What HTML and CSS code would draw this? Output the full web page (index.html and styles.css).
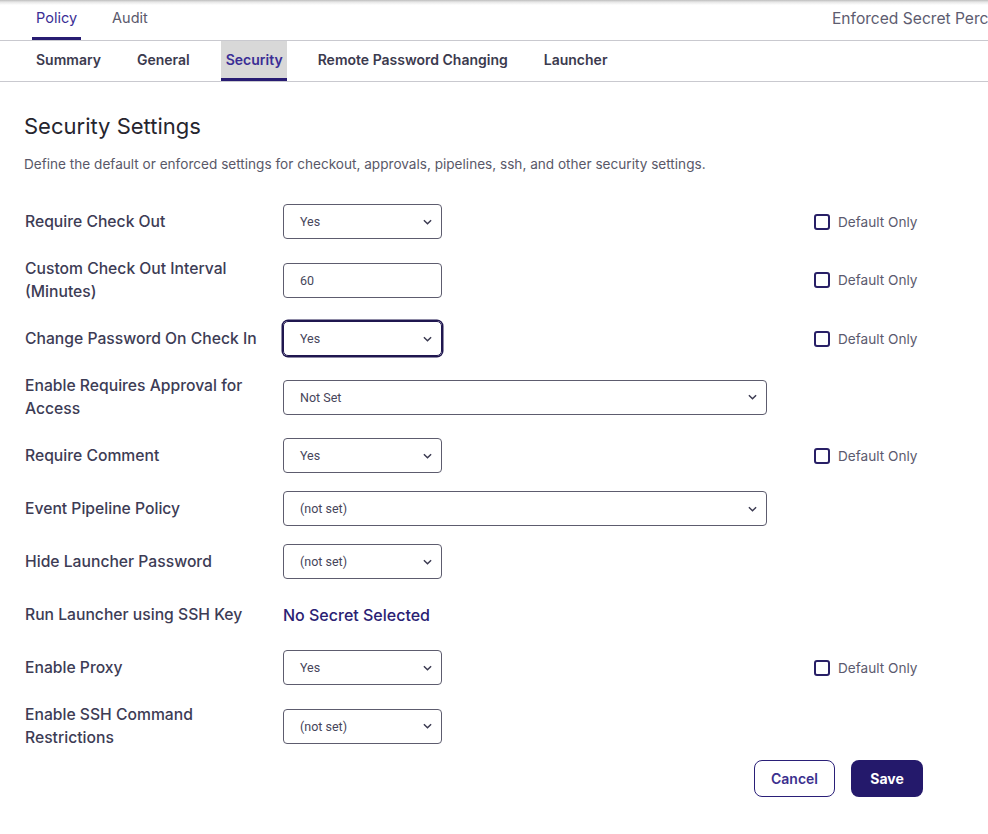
FILE: index.html
```html
<!DOCTYPE html>
<html>
<head>
<meta charset="utf-8">
<link rel="stylesheet" href="styles.css">
</head>
<body>
<div class="topbar">
  <nav class="tabs">
    <span class="tab active">Policy</span>
    <span class="tab">Audit</span>
  </nav>
  <div class="title">Enforced Secret Percentage</div>
</div>
<nav class="subtabs">
  <span class="subtab">Summary</span>
  <span class="subtab">General</span>
  <span class="subtab active">Security</span>
  <span class="subtab">Remote Password Changing</span>
  <span class="subtab">Launcher</span>
</nav>
<main class="content">
  <h1 class="heading">Security Settings</h1>
  <p class="desc">Define the default or enforced settings for checkout, approvals, pipelines, ssh, and other security settings.</p>
  <div class="form">
    <div class="label">Require Check Out</div>
    <div class="ctl"><div class="select">Yes<svg class="chev" viewBox="0 0 10 6"><polyline points="1,1 5,5 9,1"/></svg></div></div>
    <label class="chk"><span class="box"></span>Default Only</label>

    <div class="label two">Custom Check Out Interval (Minutes)</div>
    <div class="ctl"><div class="select">60</div></div>
    <label class="chk"><span class="box"></span>Default Only</label>

    <div class="label">Change Password On Check In</div>
    <div class="ctl"><div class="select focus">Yes<svg class="chev" viewBox="0 0 10 6"><polyline points="1,1 5,5 9,1"/></svg></div></div>
    <label class="chk"><span class="box"></span>Default Only</label>

    <div class="label two">Enable Requires Approval for Access</div>
    <div class="ctl"><div class="select wide">Not Set<svg class="chev" viewBox="0 0 10 6"><polyline points="1,1 5,5 9,1"/></svg></div></div>
    <div></div>

    <div class="label">Require Comment</div>
    <div class="ctl"><div class="select">Yes<svg class="chev" viewBox="0 0 10 6"><polyline points="1,1 5,5 9,1"/></svg></div></div>
    <label class="chk"><span class="box"></span>Default Only</label>

    <div class="label">Event Pipeline Policy</div>
    <div class="ctl"><div class="select wide">(not set)<svg class="chev" viewBox="0 0 10 6"><polyline points="1,1 5,5 9,1"/></svg></div></div>
    <div></div>

    <div class="label">Hide Launcher Password</div>
    <div class="ctl"><div class="select">(not set)<svg class="chev" viewBox="0 0 10 6"><polyline points="1,1 5,5 9,1"/></svg></div></div>
    <div></div>

    <div class="label">Run Launcher using SSH Key</div>
    <div class="ctl"><span class="link">No Secret Selected</span></div>
    <div></div>

    <div class="label">Enable Proxy</div>
    <div class="ctl"><div class="select">Yes<svg class="chev" viewBox="0 0 10 6"><polyline points="1,1 5,5 9,1"/></svg></div></div>
    <label class="chk"><span class="box"></span>Default Only</label>

    <div class="label two">Enable SSH Command Restrictions</div>
    <div class="ctl"><div class="select">(not set)<svg class="chev" viewBox="0 0 10 6"><polyline points="1,1 5,5 9,1"/></svg></div></div>
    <div></div>
  </div>
  <div class="actions">
    <button class="btn cancel">Cancel</button>
    <button class="btn save">Save</button>
  </div>
</main>
</body>
</html>
```

FILE: styles.css
```css
* { box-sizing: border-box; }
html, body { margin: 0; padding: 0; background: #fff; overflow: hidden; }
body { font-family: Inter, "Noto Sans", sans-serif; color: #3b3a52; width: 988px; }

.topbar {
  height: 41px;
  display: flex;
  border-bottom: 1px solid #c9c9cf;
  background: linear-gradient(#bdbdbd 0, #e6e6e6 2px, #fff 5px);
  white-space: nowrap;
  overflow: hidden;
}
.tabs { display: flex; padding-left: 32px; gap: 27px; }
.tab {
  font-size: 14.5px;
  color: #5a596b;
  padding: 9px 4px 0;
  height: 40px;
  border-bottom: 3px solid transparent;
}
.tab.active { color: #3a2d95; border-bottom-color: #281c72; }
.title { font-size: 15.6px; color: #5d5c70; padding-top: 9px; margin-left: auto; width: 156px; overflow: hidden; }

.subtabs {
  display: flex;
  height: 41px;
  border-bottom: 1px solid #c9c9cf;
  padding-left: 31px;
  gap: 26px;
}
.subtab {
  font-size: 14px;
  font-weight: 600;
  color: #3b3a4e;
  padding: 10px 5px 0;
  height: 40px;
  border-bottom: 3px solid transparent;
  white-space: nowrap;
}
.subtab.active { background: #d8d8d8; color: #3a2d95; border-bottom-color: #281c72; padding: 10px 4px 0 5px; }

.content { padding: 0 24px; }
.heading { font-size: 22px; font-weight: 400; color: #26252e; margin: 30px 0 0; line-height: 28px; }
.desc { font-size: 13.6px; color: #595868; margin: 15px 0 31px; line-height: 18px; }

.form {
  display: grid;
  grid-template-columns: 258px 484px 1fr;
  row-gap: 18px;
  align-items: center;
  padding-left: 1px;
}
.label { font-size: 15.7px; font-weight: 500; color: #3d3c55; line-height: 24px; padding-right: 20px; }
.label.two { line-height: 23px; }
.ctl { display: flex; align-items: center; min-height: 35px; }
.select {
  width: 159px;
  height: 35px;
  border: 1px solid #5d5c6e;
  border-radius: 4px;
  display: flex;
  align-items: center;
  justify-content: space-between;
  padding: 0 9px 0 16px;
  font-family: Roboto, "Liberation Sans", sans-serif;
  font-size: 12.5px;
  color: #46455a;
}
.select.wide { width: 484px; }
.select.focus { border-color: #1f164f; box-shadow: 0 0 0 1.5px #1f164f; border-radius: 5px; }
.chev { width: 9px; height: 6px; fill: none; stroke: #3a3950; stroke-width: 1.6; }
.link { font-size: 16px; font-weight: 500; color: #2a2173; }

.chk { display: flex; align-items: center; gap: 8px; font-size: 13.6px; color: #5b5a6e; padding-left: 47px; white-space: nowrap; }
.box { width: 16px; height: 16px; border: 2px solid #281f66; border-radius: 3px; flex: none; }

.actions { display: flex; justify-content: flex-end; gap: 16px; margin: 11px 41px 0 0; }
.btn {
  height: 37px;
  border-radius: 8px;
  font-family: Inter, sans-serif;
  font-size: 14px;
  font-weight: 600;
}
.cancel { width: 81px; background: #fff; border: 1px solid #2a1f78; color: #3b2f8e; }
.save { width: 72px; background: #24196b; border: none; color: #fff; font-weight: 700; }
```
